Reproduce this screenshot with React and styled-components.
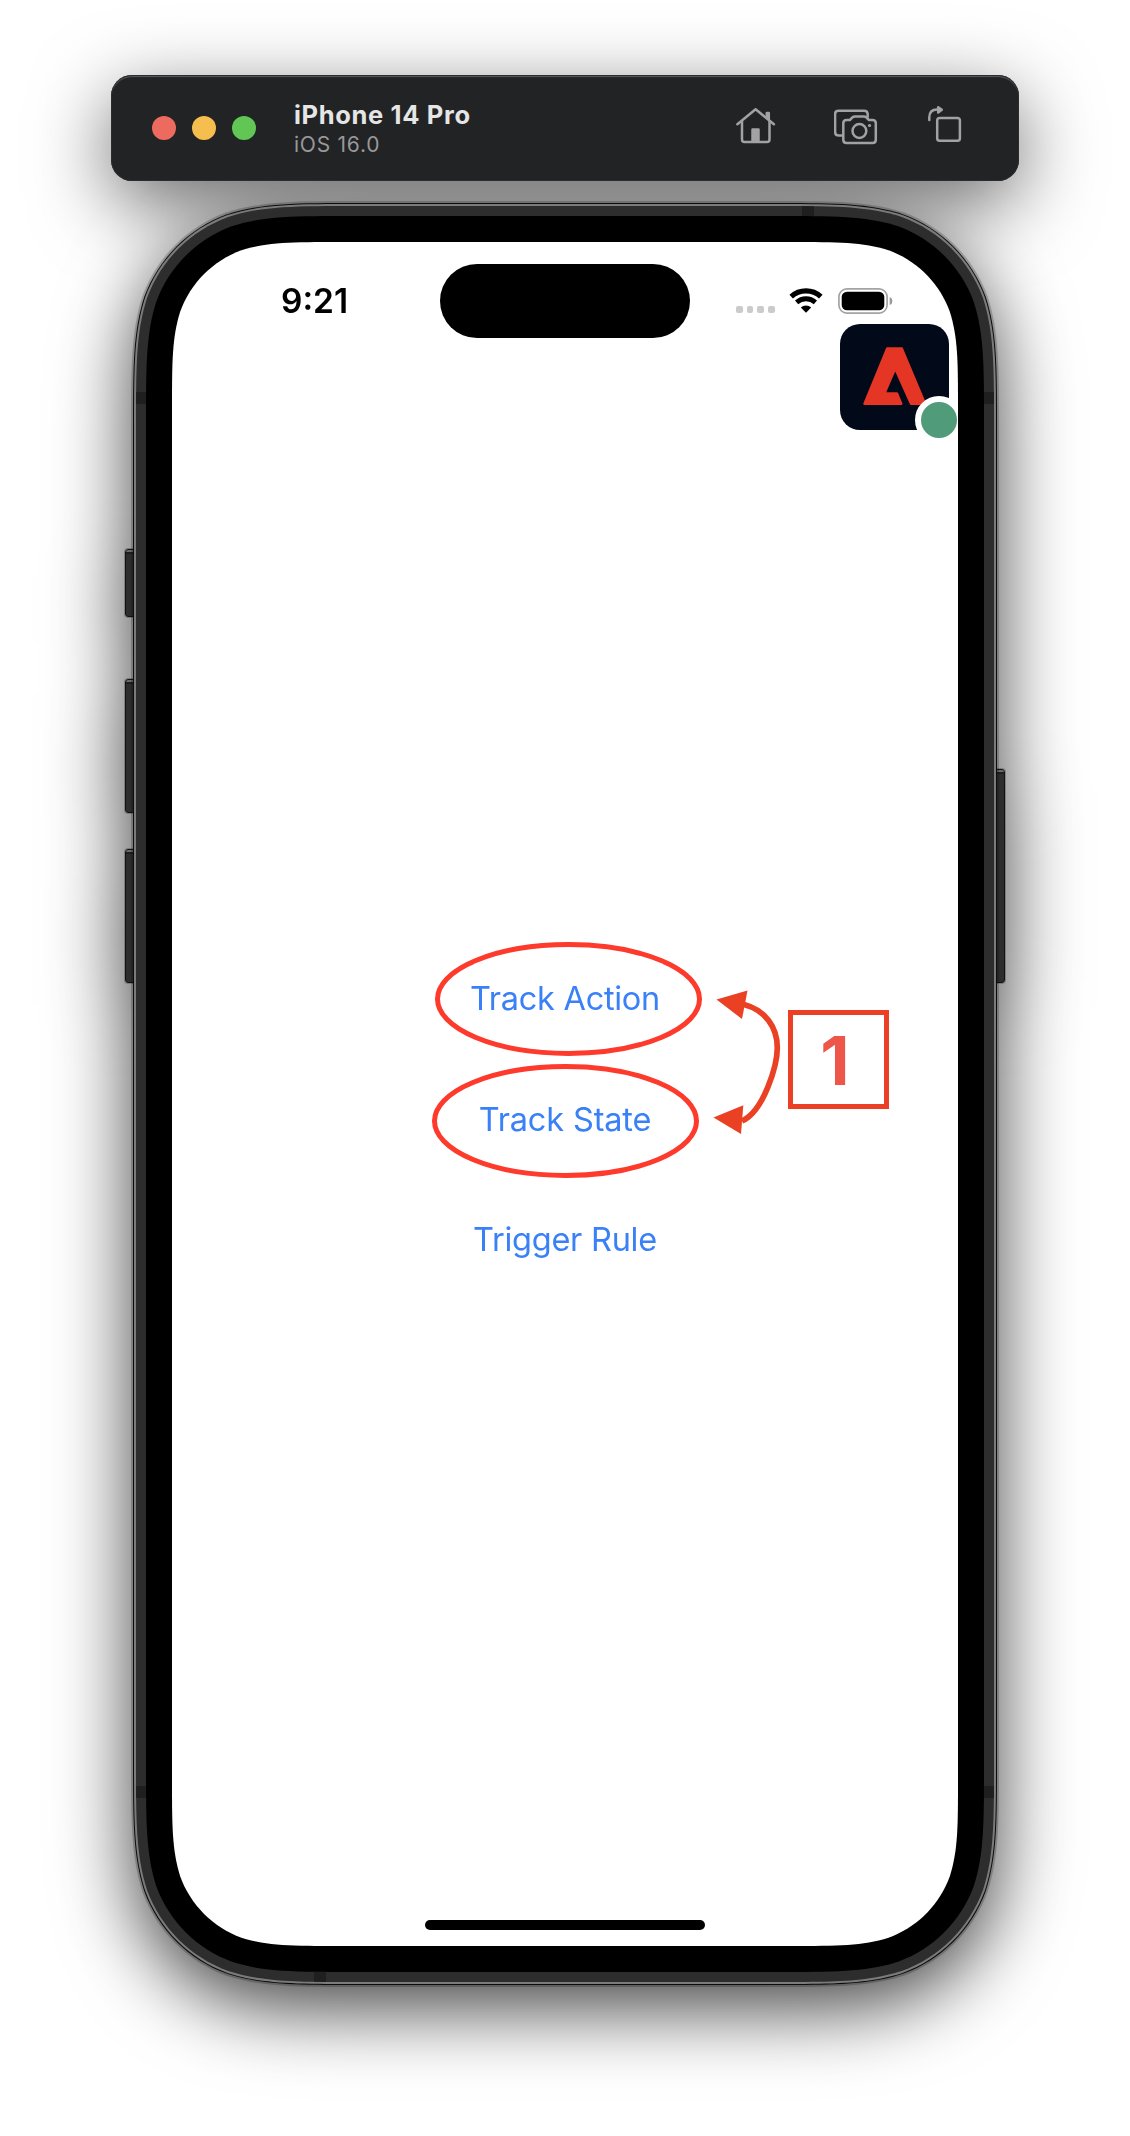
import React from "react";
import styled, { createGlobalStyle } from "styled-components";

const GlobalStyle = createGlobalStyle`
  *, *::before, *::after { box-sizing: border-box; }
  html, body { margin: 0; background: #fff; }
  body { font-family: Inter, "Liberation Sans", sans-serif; -webkit-font-smoothing: antialiased; }
`;

/* Rounded rectangle with continuous-curvature corners. */
function smoothRect(w, h, r) {
  const a = 1.52866498 * r;
  const b = 1.08849296 * r;
  const c = 0.86840694 * r;
  const d = 0.63149379 * r;
  const e = 0.07491139 * r;
  const f = 0.37282383 * r;
  const g = 0.16905956 * r;
  return [
    `M${a} 0`,
    `L${w - a} 0`,
    `C${w - b} 0 ${w - c} 0 ${w - d} ${e}`,
    `C${w - f} ${g} ${w - g} ${f} ${w - e} ${d}`,
    `C${w} ${c} ${w} ${b} ${w} ${a}`,
    `L${w} ${h - a}`,
    `C${w} ${h - b} ${w} ${h - c} ${w - e} ${h - d}`,
    `C${w - g} ${h - f} ${w - f} ${h - g} ${w - d} ${h - e}`,
    `C${w - c} ${h} ${w - b} ${h} ${w - a} ${h}`,
    `L${a} ${h}`,
    `C${b} ${h} ${c} ${h} ${d} ${h - e}`,
    `C${f} ${h - g} ${g} ${h - f} ${e} ${h - d}`,
    `C0 ${h - c} 0 ${h - b} 0 ${h - a}`,
    `L0 ${a}`,
    `C0 ${b} 0 ${c} ${e} ${d}`,
    `C${g} ${f} ${f} ${g} ${d} ${e}`,
    `C${c} 0 ${b} 0 ${a} 0Z`,
  ].join(" ");
}

const Page = styled.main`
  isolation: isolate;
  display: flex;
  flex-direction: column;
  align-items: center;
  gap: 20px;
  height: 2136px;
  padding-top: 75px;
  overflow: hidden;
  background: #fff;
`;

const Toolbar = styled.header`
  position: relative;
  display: flex;
  align-items: center;
  width: 908px;
  height: 106px;
  padding: 0 57px 0 41px;
  border-radius: 21px;
  background: #222325;
  box-shadow: inset 0 0 0 1px #2b2c2d, inset 0 2px 1px #5a5b5c;

  &::before {
    content: "";
    position: absolute;
    inset: 0;
    z-index: -1;
    border-radius: 21px;
    box-shadow: 0 22px 78px rgba(0, 0, 0, 0.58);
  }
`;

const Lights = styled.div`
  display: flex;
  gap: 16px;
`;

const Light = styled.span`
  width: 24px;
  height: 24px;
  border-radius: 50%;
  background: ${(p) => p.$color};
`;

const Titles = styled.div`
  flex: 1;
  margin: 3px 0 0 38px;
`;

const DeviceName = styled.div`
  font-size: 25.5px;
  font-weight: 700;
  line-height: 30px;
  letter-spacing: 0.65px;
  color: #e6e6e6;
`;

const SystemName = styled.div`
  font-size: 21px;
  line-height: 29px;
  letter-spacing: 0.75px;
  color: #98989a;
`;

const Tools = styled.div`
  display: flex;
  align-items: center;
  gap: 50px;

  svg { display: block; fill: none; stroke: #a2a2a4; stroke-width: 2.5; stroke-linejoin: round; stroke-linecap: round; }
  svg:nth-child(1) { margin: 0 8px 5px 0; }
  svg:nth-child(2) { margin-bottom: 3px; }
  svg:nth-child(3) { margin-bottom: 8px; }
`;

const Device = styled.section`
  position: relative;
  z-index: -1;
  flex: none;
  width: 868px;
  height: 1786px;
  filter: drop-shadow(0 22px 39px rgba(0, 0, 0, 0.75));
`;

const Shell = styled.div`
  position: relative;
  width: ${(p) => p.$w}px;
  height: ${(p) => p.$h}px;
  padding: ${(p) => p.$pad}px;
  background: ${(p) => p.$color};
  clip-path: path("${(p) => smoothRect(p.$w, p.$h, p.$r)}");
`;

const AntennaLine = styled.i`
  position: absolute;
  left: ${(p) => p.$x}px;
  top: ${(p) => p.$y}px;
  width: ${(p) => (p.$upright ? 12 : 10)}px;
  height: ${(p) => (p.$upright ? 10 : 12)}px;
  background: #1f1f1f;
`;

const SideButton = styled.i`
  position: absolute;
  ${(p) => (p.$right ? "right: -6px; border-radius: 0 3px 3px 0;" : "left: -6px; border-radius: 3px 0 0 3px;")}
  top: ${(p) => p.$top}px;
  width: 9px;
  height: ${(p) => p.$h}px;
  border: 1px solid #111;
  background: linear-gradient(#6a6a6a 0 2px, #1e1e1e 2px 4px, #2d2d2d 4px);
  box-shadow: 0 0 0 1px rgba(60, 60, 60, 0.35);
`;

const StatusBar = styled.div`
  display: grid;
  grid-template-columns: 1fr 250px 1fr;
  align-items: center;
  height: 74px;
  margin-top: 22px;
`;

const Time = styled.time`
  padding-left: 109px;
  font-size: 33.5px;
  font-weight: 600;
  line-height: 40px;
  letter-spacing: 0;
  color: #000;
`;

const Island = styled.div`
  height: 74px;
  border-radius: 37px;
  background: #000;
`;

const Indicators = styled.div`
  display: flex;
  align-items: center;
  padding-left: 46px;

  svg { display: block; }
  svg + svg { margin-left: 15px; }
`;

const SignalDots = styled.div`
  display: flex;
  gap: 4px;
  margin: 17px 14px 0 0;

  i { width: 6.7px; height: 6.7px; border-radius: 2px; background: #cbcbcb; }
`;

const Screen = styled.div`
  position: relative;
  display: flex;
  flex-direction: column;
  width: 786px;
  height: 1704px;
`;

const AssuranceButton = styled.div`
  position: absolute;
  left: 668px;
  top: 82px;
  width: 109px;
  height: 106px;
  border-radius: 20px;
  background: #020a1a;

  svg { position: absolute; left: 22px; top: 22px; }
`;

const ConnectedDot = styled.i`
  position: absolute;
  left: 75px;
  top: 72px;
  width: 48px;
  height: 48px;
  border: 6px solid #fff;
  border-radius: 50%;
  background: #509b7a;
`;

const Actions = styled.nav`
  display: flex;
  flex-direction: column;
  align-items: center;
  gap: 76.5px;
  margin-top: 639px;
`;

const Action = styled.a`
  font-size: 32.5px;
  line-height: 44px;
  letter-spacing: ${(p) => p.$track}px;
  color: #3a80f6;
`;

const HomeIndicator = styled.div`
  width: 280px;
  height: 10px;
  margin: auto auto 16px;
  border-radius: 5px;
  background: #000;
`;

const Annotations = styled.svg`
  position: absolute;
  left: 256px;
  top: 696px;
`;

const StepNumber = styled.div`
  position: absolute;
  left: 616px;
  top: 768px;
  display: flex;
  align-items: center;
  justify-content: center;
  width: 101px;
  height: 99px;
  padding-right: 7px;
  border: 5px solid #ec4026;
  font-size: 68px;
  font-weight: 700;
  line-height: 1;
  color: #ed5648;
`;

const HomeIcon = () => (
  <svg width="40" height="37" viewBox="736 107 40 37">
    <path d="M737.4 124.2 755.6 109.3 773.9 124.2" />
    <path d="M742 121.5v18q0 2.5 2.5 2.5h22.5q2.5 0 2.5-2.5v-18" />
    <path d="M766.8 113h2v6l-2-1.500z" fill="#a2a2a4" />
    <path d="M752.500 129.500h6V141h-6z" fill="#a2a2a4" />
  </svg>
);

const CameraIcon = () => (
  <svg width="44" height="37" viewBox="834 108 44 37">
    <path d="M842 135.500h-3.300q-3.600 0-3.600-3.600V114q0-3.300 3.300-3.300h25.700q3.300 0 3.600 3.300v2.700" />
    <path d="M846.600 120h3.200l2.700-2.700q1-.9 2.500-.9h8.800q1.500 0 2.500.9l2.700 2.700h3.500q3.300 0 3.300 3.300v16.400q0 3.300-3.300 3.300h-25.900q-3.300 0-3.300-3.300v-16.400q0-3.300 3.300-3.300z" />
    <circle cx="859.400" cy="131" r="6.900" />
    <circle cx="869.500" cy="125.500" r="1.600" fill="#a2a2a4" stroke="none" />
  </svg>
);

const RotateIcon = () => (
  <svg width="34" height="38" viewBox="928 105 34 38">
    <rect x="937.200" y="118" width="22.700" height="22.800" rx="2.600" />
    <path d="M929.300 120v-2.500q0-8 7.800-8h1" />
    <path d="M938.200 107.200 941.800 109.800 938.200 112.400z" fill="#a2a2a4" />
  </svg>
);

const WifiIcon = () => (
  <svg width="34" height="26" viewBox="-17 -24.700 34 26" fill="none" stroke="#000">
    <path d="M-14.800-16A21.900 21.900 0 0 1 14.800-16" strokeWidth="5.200" />
    <path d="M-9.400-10.300A14 14 0 0 1 9.400-10.300" strokeWidth="4.800" />
    <path d="M0 0-5.200-5.200A7.500 7.500 0 0 1 5.200-5.200z" fill="#000" stroke="none" />
  </svg>
);

const BatteryIcon = () => (
  <svg width="55" height="26" viewBox="0 0 55 26">
    <rect x=".9" y=".9" width="48.200" height="24.200" rx="8" fill="none" stroke="#a3a3a3" strokeWidth="1.700" />
    <rect x="3.700" y="3.700" width="42.600" height="18.600" rx="5.300" />
    <path d="M51.700 9q2.700 1 2.700 4t-2.700 4z" fill="#999" />
  </svg>
);

const AdobeMark = () => (
  <svg width="66" height="62" viewBox="0 0 66 62">
    <path
      d="M25.200 2.500H39.800L63 57.800H49L33.200 22.500 22.500 47.400H35L39.200 57.800H2.500z"
      fill="#e53524" stroke="#e53524" strokeWidth="2.400" strokeLinejoin="round"
    />
  </svg>
);

const Callouts = () => (
  <Annotations width="360" height="244" viewBox="428 938 360 244" fill="none">
    <g stroke="#fd3a2b" strokeWidth="5">
      <ellipse cx="568.500" cy="999" rx="131" ry="54.400" />
      <ellipse cx="565.500" cy="1121" rx="131" ry="54.400" />
    </g>
    <g stroke="#ea4125" strokeWidth="5.700">
      <path d="M744 1004.500C765 1010 777.500 1027 777.300 1048 777.200 1065 764 1111 742 1121" />
    </g>
    <path d="M716.500 999.500 747.500 990.500 742 1019z" fill="#ea4125" />
    <path d="M713.500 1117.500 743.300 1105.300 741 1134z" fill="#ea4125" />
  </Annotations>
);

export default function App() {
  return (
    <Page>
      <GlobalStyle />
      <Toolbar>
        <Lights>
          <Light $color="#ed6a5f" />
          <Light $color="#f5be4f" />
          <Light $color="#62c655" />
        </Lights>
        <Titles>
          <DeviceName>iPhone 14 Pro</DeviceName>
          <SystemName>iOS 16.0</SystemName>
        </Titles>
        <Tools>
          <HomeIcon />
          <CameraIcon />
          <RotateIcon />
        </Tools>
      </Toolbar>

      <Device>
        <SideButton $top={348} $h={68} />
        <SideButton $top={478} $h={134} />
        <SideButton $top={648} $h={134} />
        <SideButton $right $top={568} $h={214} />
        <Shell $w={868} $h={1786} $r={151} $pad={2} $color="rgba(0, 0, 0, 0.2)">
          <Shell $w={864} $h={1782} $r={149} $pad={1} $color="#0c0c0c">
            <Shell $w={862} $h={1780} $r={148} $pad={2} $color="#7b7b7b">
              <Shell $w={858} $h={1776} $r={146} $pad={10} $color="#2d2d2d">
                <AntennaLine $x={0} $y={186} />
                <AntennaLine $x={848} $y={186} />
                <AntennaLine $x={0} $y={1580} />
                <AntennaLine $x={848} $y={1580} />
                <AntennaLine $upright $x={666} $y={0} />
                <AntennaLine $upright $x={178} $y={1766} />
                <Shell $w={838} $h={1756} $r={136} $pad={26} $color="#000">
                  <Shell $w={786} $h={1704} $r={110} $pad={0} $color="#fff">
                    <Screen>
                      <StatusBar>
                        <Time>9:21</Time>
                        <Island />
                        <Indicators>
                          <SignalDots><i /><i /><i /><i /></SignalDots>
                          <WifiIcon />
                          <BatteryIcon />
                        </Indicators>
                      </StatusBar>
                      <Actions>
                        <Action $track={-0.28}>Track Action</Action>
                        <Action $track={-0.15}>Track State</Action>
                        <Action $track={-0.25}>Trigger Rule</Action>
                      </Actions>
                      <HomeIndicator />
                      <AssuranceButton>
                        <AdobeMark />
                        <ConnectedDot />
                      </AssuranceButton>
                      <Callouts />
                      <StepNumber>1</StepNumber>
                    </Screen>
                  </Shell>
                </Shell>
              </Shell>
            </Shell>
          </Shell>
        </Shell>
      </Device>
    </Page>
  );
}
